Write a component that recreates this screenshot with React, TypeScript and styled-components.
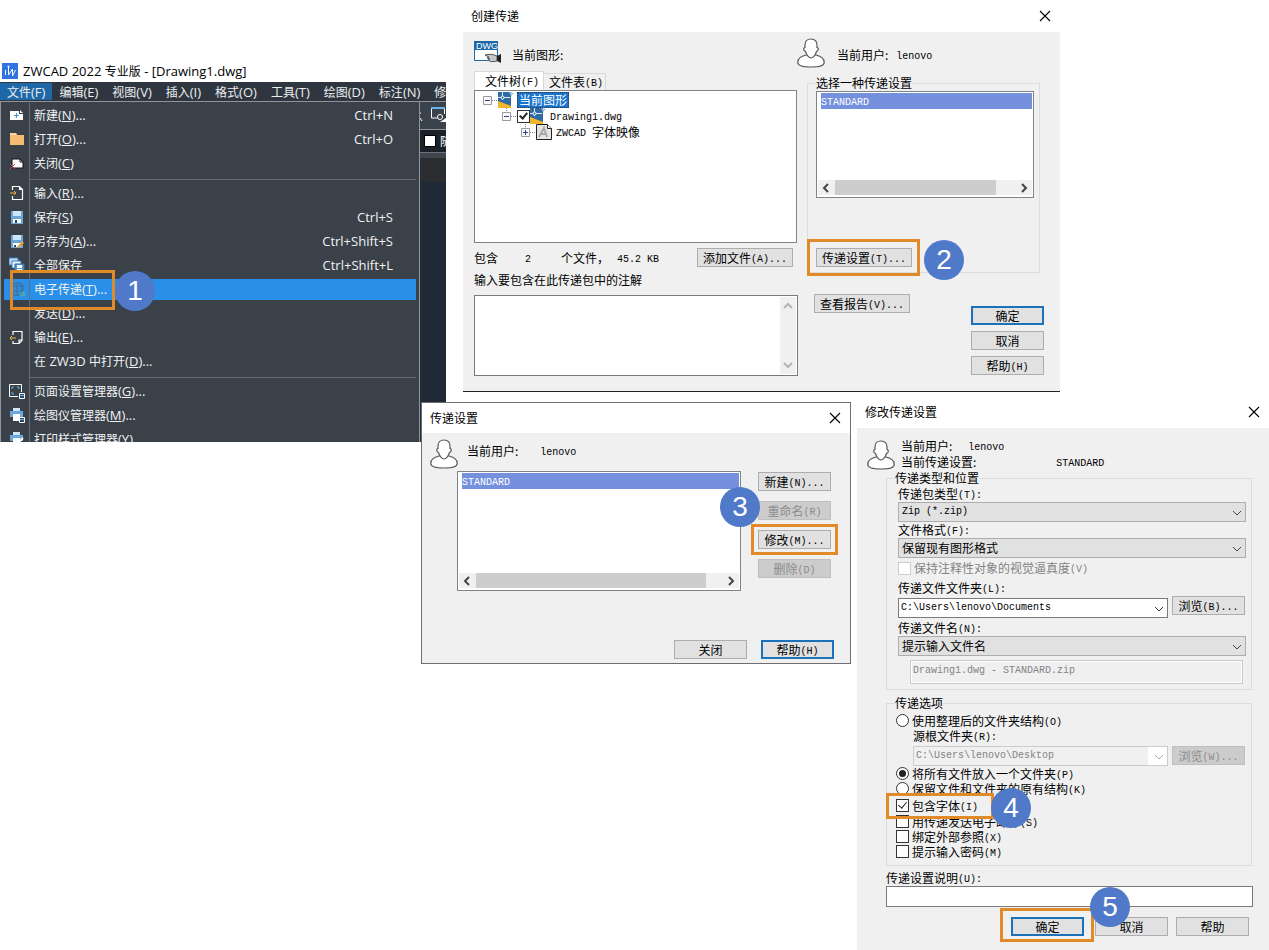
import React from 'react';
import styled, { createGlobalStyle, css } from 'styled-components';

const Global = createGlobalStyle`
  *, *::before, *::after { box-sizing: border-box; }
  body { margin: 0; background: #fff; }
  button, input, select, textarea { font: inherit; color: inherit; margin: 0; }
`;

/* ---------- text ---------- */

const Latin = styled.span`
  line-height: 1;
  white-space: pre;
`;

const Mixed = ({ children }: { children: string }) => (
  <>
    {children
      .split(/([\x20-\x7e]+)/)
      .filter(Boolean)
      .map((run, i) => (/^[\x20-\x7e]/.test(run) ? <Latin key={i}>{run}</Latin> : run))}
  </>
);

/* ---------- desktop and windows ---------- */

const Desktop = styled.main`
  position: relative;
  min-height: 100vh;
  overflow: hidden;
  font-family: 'Noto Sans CJK SC', sans-serif;
  font-size: 12px;
  line-height: 16px;
  color: #000;
`;

const AppWindow = styled.section`
  position: absolute;
  left: 0;
  top: 60px;
  width: 446px;
  overflow: hidden;
  background: #fff;
  ${Latin} { font-family: 'Open Sans', sans-serif; font-size: 13px; }
`;

const Dialog = styled.section<{ $x: number; $y: number; $w: number; $edge?: 'all' | 'bottom' }>`
  position: absolute;
  left: ${(p) => p.$x}px;
  top: ${(p) => p.$y}px;
  width: ${(p) => p.$w}px;
  background: #f0f0f0;
  ${(p) => p.$edge === 'all' && css`border: 1px solid #6c6e71;`}
  ${(p) => p.$edge === 'bottom' && css`border-bottom: 1px solid #222;`}
  ${Latin} { font-family: 'Liberation Mono', monospace; font-size: 10px; vertical-align: 1px; }
`;

const DialogTitle = styled.header<{ $h: number }>`
  display: flex;
  align-items: center;
  justify-content: space-between;
  height: ${(p) => p.$h}px;
  padding: 0 9px 0 8px;
  background: #fff;
  h2 { margin: 0; font-size: 12px; font-weight: 400; }
`;

const CloseButton = styled.button`
  display: grid;
  padding: 0;
  border: 0;
  background: none;
`;

const TitleBar = ({ text, h }: { text: string; h: number }) => (
  <DialogTitle $h={h}>
    <h2>{text}</h2>
    <CloseButton aria-label="关闭">
      <svg width="12" height="12" viewBox="0 0 12 12" fill="none" stroke="#000" strokeWidth="1.1">
        <path d="M1 1l10 10M11 1L1 11" />
      </svg>
    </CloseButton>
  </DialogTitle>
);

/* ---------- step marks ---------- */

const Anchor = styled.div`
  position: relative;
  display: flex;
`;

const Ring = styled.span<{ $inset: string; $w?: number }>`
  position: absolute;
  z-index: 2;
  inset: ${(p) => p.$inset};
  ${(p) => p.$w && css`width: ${p.$w}px;`}
  border: 3px solid #e08a28;
  pointer-events: none;
`;

const Badge = styled.span<{ $left: number; $top: number }>`
  position: absolute;
  z-index: 3;
  left: ${(p) => p.$left}px;
  top: ${(p) => p.$top}px;
  width: 40px;
  height: 40px;
  border-radius: 50%;
  background: #5179c9;
  color: #fff;
  font: 28px/40px 'Liberation Sans', sans-serif;
  text-align: center;
`;

/* ---------- application window ---------- */

const AppTitle = styled.header`
  display: flex;
  align-items: center;
  gap: 5px;
  height: 22px;
  padding: 0 2px;
  h1 { margin: 0; font-size: 12px; font-weight: 400; white-space: nowrap; }
`;

const MenuBar = styled.nav`
  display: flex;
  height: 19px;
  padding: 1px 0 1px;
  background: #2f363f;
  color: #eceef0;
`;

const MenuBarItem = styled.button<{ $open?: boolean }>`
  flex: none;
  padding: 0 7px;
  border: 0;
  background: ${(p) => (p.$open ? '#1e68a8' : 'none')};
  line-height: 16px;
  white-space: nowrap;
`;

const AppBody = styled.div`
  display: flex;
  background: #202a36;
`;

const Menu = styled.div`
  flex: none;
  width: 420px;
  padding: 1px 3px 0;
  border: 1px solid #8d949b;
  border-bottom: 0;
  background: #3a4149;
  color: #f1f2f3;
`;

const IconSlot = styled.span`
  display: flex;
  flex: none;
  align-items: center;
  width: 26px;
  height: 24px;
  padding-left: 5px;
  border-right: 1px solid #666d75;
`;

const MenuRow = styled.button<{ $active?: boolean; $cut?: boolean }>`
  position: relative;
  display: flex;
  align-items: flex-start;
  width: 100%;
  height: ${(p) => (p.$cut ? 15 : 24)}px;
  padding: 0 23px 0 0;
  border: 0;
  overflow: ${(p) => (p.$cut ? 'hidden' : 'visible')};
  background: ${(p) => (p.$active ? 'linear-gradient(#2a8fe8, #2a8fe8) 0 2px / 100% 21px no-repeat' : 'none')};
  line-height: 24px;
  text-align: left;
  white-space: nowrap;
`;

const MenuText = styled.span`
  flex: 1;
  padding-left: 4px;
`;

const MenuLine = styled.div`
  display: flex;
  height: 6px;
  &::before { content: ''; width: 26px; border-right: 1px solid #666d75; }
  &::after { content: ''; flex: 1; height: 1px; margin-top: 4px; background: #666d75; }
`;

const Side = styled.div`
  flex: 1;
  min-width: 0;
  overflow: hidden;
  color: #fff;
`;

const SideTools = styled.div`
  height: 29px;
  border-top: 1px solid #8d949b;
  border-bottom: 1px solid #8d949b;
  background: #3a424c;
`;

const SideLayer = styled.div`
  display: flex;
  align-items: center;
  gap: 4px;
  height: 23px;
  padding-left: 4px;
  border-bottom: 1px solid #6b727a;
  background: #1b2029;
  white-space: nowrap;
  &::before { content: ''; flex: none; width: 12px; height: 12px; background: #fff; border: 1px solid #000; }
`;

const SideStrip = styled.div`
  height: 29px;
  border-top: 5px solid #3f4650;
  background: #2c2d31;
`;

type IconName = 'new' | 'open' | 'close' | 'import' | 'save' | 'saveas' | 'saveall' | 'globe' | 'export' | 'page' | 'plotter' | 'style';

const glyphs: Record<IconName, React.ReactNode> = {
  new: (
    <>
      <path d="M1 4h9v3h4v6H1z" fill="#fff" />
      <path d="M11 3l3 3h-3z" fill="#fff" />
      <path d="M7.500 6v5M5 8.500h5" stroke="#3b97d8" />
    </>
  ),
  open: (
    <>
      <path d="M1 2h6l1 2h7v10H1z" fill="#f5bb72" />
      <path d="M1 2h6l1 2H1z" fill="#fbd9a6" />
    </>
  ),
  close: (
    <>
      <path d="M3 4h8l3 3v6H3z" fill="#fff" stroke="#111" />
      <path d="M11 4v3h3" stroke="#111" fill="none" />
      <path d="M1 9l5 5M6 9l-5 5" stroke="#b8444c" />
    </>
  ),
  import: (
    <>
      <path d="M3.500 5V1.500h7l3 3v10h-10V11M10.500 1.500v3h3" stroke="#fff" fill="none" strokeWidth="1.2" />
      <path d="M1 8h6M5 6l2 2-2 2" stroke="#e8b04a" fill="none" />
    </>
  ),
  save: (
    <>
      <path d="M2 2h12v13H2z" fill="#6ba5d8" />
      <path d="M4 2h8v5H4z" fill="#cfe6fa" />
      <path d="M4 10h8v4H4z" fill="#fff" />
      <path d="M6 11h2v3H6z" fill="#2d4a68" />
    </>
  ),
  saveas: (
    <>
      <path d="M2 2h12v13H2z" fill="#6ba5d8" />
      <path d="M4 2h8v5H4z" fill="#cfe6fa" />
      <path d="M4 10h8v4H4z" fill="#fff" />
      <path d="M5 12h2v2H5z" fill="#2d4a68" />
      <path d="M8 14l5-6 2 2-5 5z" fill="#e8a13a" />
    </>
  ),
  saveall: (
    <>
      <path d="M0 1h9v7H0z" fill="#bcdcf7" stroke="#3c7fbd" />
      <path d="M3 4h9v7H3z" fill="#e6f3fd" stroke="#3c7fbd" />
      <path d="M6 7h9v8H6z" fill="#5b9bd5" stroke="#2f6dab" />
      <path d="M8 8h5v3H8zM8 12h5v2H8z" fill="#fff" />
    </>
  ),
  globe: (
    <g stroke="#3f6c98" fill="none">
      <circle cx="8" cy="8" r="6.500" />
      <path d="M1 5h14M1 10h14M8 1v14M5 2c-2 4-2 8 0 12M11 2c2 4 2 8 0 12" />
      <path d="M11 12h5M14 10l2 2M16 14h-5M13 16l-2-2" stroke="#5fbf8a" />
    </g>
  ),
  export: (
    <>
      <path d="M4 6V2.500h9v9l-3 3H4V12M10 14v-3h3" stroke="#fff" fill="none" strokeWidth="1.200" />
      <path d="M1 9h6M3 7L1 9l2 2" stroke="#e8b04a" fill="none" />
    </>
  ),
  page: (
    <>
      <path d="M9 13.500H.500V1.500h12V9" stroke="#fff" fill="none" />
      <path d="M3 6V4h2M8 4h2v2M3 9v2h2" stroke="#6bb1ee" fill="none" />
      <path d="M10.500 10.500h5v5h-5z" fill="#2d4a68" stroke="#fff" />
      <path d="M11 12.500h4" stroke="#6bb1ee" />
    </>
  ),
  plotter: (
    <>
      <path d="M4 1h7v4H4z" fill="#cfe6fa" />
      <path d="M1 4h13v6H1z" fill="#6aa7dd" />
      <path d="M4 7h7v7H4z" fill="#fff" />
      <path d="M10.500 10.500h5v5h-5z" fill="#2d4a68" stroke="#fff" />
      <path d="M11 12.500h4" stroke="#6bb1ee" />
    </>
  ),
  style: (
    <>
      <path d="M4 1h7v4H4z" fill="#cfe6fa" />
      <path d="M1 4h13v6H1z" fill="#6aa7dd" />
      <path d="M4 7h7v7H4z" fill="#fff" />
      <path d="M8 13l6-6" stroke="#fff" strokeWidth="2" />
    </>
  ),
};

interface Entry {
  icon?: IconName;
  label: string;
  mnemonic?: string;
  tail?: string;
  shortcut?: string;
  active?: boolean;
  cut?: boolean;
}

const fileMenu: (Entry | null)[] = [
  { icon: 'new', label: '新建', mnemonic: 'N', tail: '...', shortcut: 'Ctrl+N' },
  { icon: 'open', label: '打开', mnemonic: 'O', tail: '...', shortcut: 'Ctrl+O' },
  { icon: 'close', label: '关闭', mnemonic: 'C' },
  null,
  { icon: 'import', label: '输入', mnemonic: 'R', tail: '...' },
  { icon: 'save', label: '保存', mnemonic: 'S', shortcut: 'Ctrl+S' },
  { icon: 'saveas', label: '另存为', mnemonic: 'A', tail: '...', shortcut: 'Ctrl+Shift+S' },
  { icon: 'saveall', label: '全部保存', shortcut: 'Ctrl+Shift+L' },
  { icon: 'globe', label: '电子传递', mnemonic: 'T', tail: '...', active: true },
  { label: '发送', mnemonic: 'D', tail: '...' },
  { icon: 'export', label: '输出', mnemonic: 'E', tail: '...' },
  { label: '在 ZW3D 中打开', mnemonic: 'D', tail: '...' },
  null,
  { icon: 'page', label: '页面设置管理器', mnemonic: 'G', tail: '...' },
  { icon: 'plotter', label: '绘图仪管理器', mnemonic: 'M', tail: '...' },
  { icon: 'style', label: '打印样式管理器', mnemonic: 'Y', cut: true },
];

const MenuItem = ({ e }: { e: Entry }) => (
  <MenuRow $active={e.active} $cut={e.cut}>
    <IconSlot>
      {e.icon && <svg width="16" height="16" viewBox="0 0 16 16">{glyphs[e.icon]}</svg>}
    </IconSlot>
    <MenuText>
      <Mixed>{e.label}</Mixed>
      {e.mnemonic && <Latin>(<u>{e.mnemonic}</u>){e.tail}</Latin>}
    </MenuText>
    {e.shortcut && <span><Mixed>{e.shortcut}</Mixed></span>}
    {e.active && (
      <>
        <Ring $inset="-7px auto -9px 6px" $w={105} />
        <Badge $left={111} $top={-6}>1</Badge>
      </>
    )}
  </MenuRow>
);

/* ---------- dialog parts ---------- */

const Button = styled.button<{ $wide?: boolean; $primary?: boolean }>`
  flex: none;
  width: ${(p) => (p.$wide ? 96 : 73)}px;
  height: 19px;
  padding: 0;
  border: ${(p) => (p.$primary ? '2px solid #1b72ba' : '1px solid #adadad')};
  background: #e1e1e1;
  line-height: ${(p) => (p.$primary ? 14 : 16)}px;
  white-space: nowrap;
  &:disabled { border-color: #bfbfbf; background: #ccc; color: #8b8b8b; }
`;

const Person = () => (
  <svg width="28" height="30" viewBox="0 0 28 30" fill="#fff" stroke="#55585c" strokeWidth="1.200">
    <path d="M9 17C4 18.500.800 20 .800 24.500c0 3 4 4.500 13.200 4.500s13.200-1.500 13.200-4.500c0-4.500-3.200-6-8.200-7.500z" />
    <path d="M14 1c-4 0-6 2.500-6 6v2.500c-1.800 0-1.800 3.500.500 4C9.500 17 12 20 14 20s4.500-3 5.500-6.500c2.300-.500 2.300-4 .500-4V7c0-3.500-2-6-6-6z" />
  </svg>
);

const Chevron = ({ d, color = '#444', w = 2 }: { d: 'left' | 'right' | 'up' | 'down'; color?: string; w?: number }) => {
  const paths = { left: 'M7 1L3 5l4 4', right: 'M3 1l4 4-4 4', up: 'M1 7l4-4 4 4', down: 'M1 3l4 4 4-4' };
  return (
    <svg width="10" height="10" viewBox="0 0 10 10" fill="none" stroke={color} strokeWidth={w}>
      <path d={paths[d]} />
    </svg>
  );
};

const ListFrame = styled.div<{ $h: number; $w?: number }>`
  display: flex;
  flex-direction: column;
  justify-content: space-between;
  flex: none;
  width: ${(p) => (p.$w ? `${p.$w}px` : '100%')};
  height: ${(p) => p.$h}px;
  padding: 1px 1px 2px;
  border: 1px solid #7f848b;
  background: #fff;
`;

const Option = styled.div`
  height: 16px;
  margin-left: 3px;
  background: #7590dc;
  color: #fff;
`;

const ScrollTrack = styled.div`
  display: flex;
  align-items: center;
  height: 15px;
  padding: 0 3px;
  background: #f0f0f0;
`;

const ScrollThumb = styled.span<{ $rest: number }>`
  flex: 1;
  height: 15px;
  margin: 0 ${(p) => p.$rest}px 0 4px;
  background: #cdcdcd;
`;

const SetupList = ({ h, w, rest }: { h: number; w?: number; rest: number }) => (
  <ListFrame $h={h} $w={w} role="listbox" aria-label="传递设置">
    <Option role="option" aria-selected="true"><Mixed>STANDARD</Mixed></Option>
    <ScrollTrack>
      <Chevron d="left" />
      <ScrollThumb $rest={rest} />
      <Chevron d="right" />
    </ScrollTrack>
  </ListFrame>
);

const Group = styled.fieldset`
  min-width: 0;
  margin: 0;
  padding: 0 5px 5px 8px;
  border: 1px solid #dcdcdc;
  legend { height: 16px; padding: 0; }
`;

const Who = styled.div<{ $gap: number }>`
  display: flex;
  align-items: baseline;
  gap: ${(p) => p.$gap}px;
`;

/* ---------- dialog 1: create transmittal ---------- */

const CreateBody = styled.div`
  display: grid;
  grid-template-columns: 324px 1fr;
  column-gap: 9px;
  padding: 6px 16px 15px 11px;
`;

const HeadCell = styled.div<{ $gap: number; $indent?: boolean }>`
  display: flex;
  align-items: center;
  gap: ${(p) => p.$gap}px;
  height: 33px;
  margin-left: ${(p) => (p.$indent ? -10 : 0)}px;
  svg { margin-bottom: 3px; }
`;

const Tabs = styled.div`
  display: flex;
  align-items: flex-end;
  height: 19px;
`;

const Tab = styled.button<{ $on?: boolean }>`
  height: ${(p) => (p.$on ? 19 : 17)}px;
  padding: 0 ${(p) => (p.$on ? 4 : 2)}px 0 ${(p) => (p.$on ? 10 : 5)}px;
  border: 1px solid #d9d9d9;
  border-bottom: 0;
  border-left-width: ${(p) => (p.$on ? 1 : 0)}px;
  background: ${(p) => (p.$on ? '#fff' : '#f0f0f0')};
  line-height: 16px;
`;

const Tree = styled.div`
  width: 323px;
  height: 153px;
  padding-top: 1px;
  border: 1px solid #7f848b;
  background: #fff;
`;

const TreeRow = styled.div<{ $depth: number }>`
  display: flex;
  align-items: center;
  height: 16px;
  padding-left: ${(p) => 8 + p.$depth * 19}px;
  input { flex: none; }
`;

const TreeLabel = styled.span<{ $gap: number; $selected?: boolean }>`
  height: 16px;
  margin-left: ${(p) => p.$gap}px;
  padding: 0 2px;
  ${(p) => p.$selected && css`background: #1874cd; color: #fff; outline: 1px dotted #333; outline-offset: -1px;`}
`;

const Expander = ({ open, top }: { open?: boolean; top?: boolean }) => (
  <svg width="15" height="16" viewBox="0 0 15 16" fill="none">
    {!top && <path d="M4.500 0v4" stroke="#888" strokeDasharray="1 1" />}
    <path d="M9 8.500h6" stroke="#888" strokeDasharray="1 1" />
    <path d="M.500 4.500h8v8h-8z" fill="#fafafa" stroke="#9a9a9a" />
    <path d={open ? 'M2 8.500h5' : 'M2 8.500h5M4.500 6v5'} stroke="#33439a" />
  </svg>
);

const DrawingIcon = () => (
  <svg width="16" height="16" viewBox="0 0 16 16" fill="none">
    <path d="M0 0h13v16H0z" fill="#2f6aa5" />
    <path d="M0 9l13 5v2H0z" fill="#f2b62b" />
    <path d="M11 0l5 1-3 3z" fill="#9fc0e0" />
    <path d="M4.500 0v8M0 5.500h12" stroke="#dcebf8" />
    <circle cx="4.500" cy="5.500" r="1.500" fill="#2f6aa5" stroke="#fff" />
  </svg>
);

const FontIcon = () => (
  <svg width="16" height="16" viewBox="0 0 16 16" fill="none">
    <path d="M.500.500h11l4 4v11H.500z" fill="#e4e4e4" stroke="#222" />
    <path d="M11.500.500v4h4" fill="#fff" stroke="#222" />
    <path d="M3 13l5-9 3 9M5 10h5" stroke="#aaa" strokeWidth="2" />
  </svg>
);

const DwgIcon = () => (
  <svg width="28" height="24" viewBox="0 0 28 24" fill="none">
    <path d="M.500.500h23v19H.500z" fill="#fff" stroke="#1b67a8" />
    <path d="M0 0h24v9H0z" fill="#1b67a8" />
    <text x="2" y="8" fontSize="9" fontFamily="Liberation Sans, sans-serif" fill="#fff">DWG</text>
    <path d="M11 14c4-1 8-1 12 1v5c-4 1-7 1-9-1l2-1-3-1 2-1z" fill="#c8c8c8" stroke="#555" />
    <path d="M23 15l4-2v9l-4-2z" fill="#222" />
  </svg>
);

const InfoRow = styled.div`
  display: flex;
  align-items: center;
  height: 19px;
  margin: 5px 0;
  padding-right: 5px;
`;

const InfoCell = styled.span<{ $w?: number }>`
  ${(p) => (p.$w ? `flex: none; width: ${p.$w}px;` : 'flex: 1;')}
  white-space: nowrap;
`;

const Note = styled.label`
  display: block;
  height: 16px;
`;

const NoteBox = styled.div`
  display: flex;
  height: 81px;
  margin-top: 7px;
  padding: 1px;
  border: 1px solid #7a7a7a;
  background: #fff;
  textarea { flex: 1; min-width: 0; border: 0; outline: 0; resize: none; background: none; overflow: hidden; }
`;

const NoteScroll = styled.span`
  display: flex;
  flex-direction: column;
  align-items: center;
  justify-content: space-between;
  width: 16px;
  padding: 4px 0;
  background: #f0f0f0;
`;

const Column = styled.div<{ $top?: number }>`
  display: flex;
  flex-direction: column;
  padding-top: ${(p) => p.$top ?? 0}px;
`;

const SetupGroup = styled(Group)`
  margin-right: 4px;
`;

const SetupButton = styled(Anchor)`
  width: 96px;
  margin-top: 50px;
`;

const Actions = styled.div`
  display: flex;
  justify-content: space-between;
  align-items: flex-start;
  margin-top: 21px;
  padding-left: 7px;
`;

const Stack = styled.div<{ $gap: number; $top?: number }>`
  display: flex;
  flex-direction: column;
  gap: ${(p) => p.$gap}px;
  padding-top: ${(p) => p.$top ?? 0}px;
`;

const CreateDialog = () => (
  <Dialog $x={463} $y={0} $w={597} $edge="bottom">
    <TitleBar text="创建传递" h={32} />
    <CreateBody>
      <HeadCell $gap={10}><DwgIcon /><span>当前图形:</span></HeadCell>
      <HeadCell $gap={12} $indent><Person /><Who $gap={8}><span>当前用户:</span><span><Mixed>lenovo</Mixed></span></Who></HeadCell>
      <Column>
        <Tabs role="tablist">
          <Tab $on role="tab" aria-selected="true"><Mixed>文件树(F)</Mixed></Tab>
          <Tab role="tab" aria-selected="false"><Mixed>文件表(B)</Mixed></Tab>
        </Tabs>
        <Tree role="tree" aria-label="文件树">
          <TreeRow $depth={0} role="treeitem">
            <Expander open top /><DrawingIcon /><TreeLabel $gap={3} $selected>当前图形</TreeLabel>
          </TreeRow>
          <TreeRow $depth={1} role="treeitem">
            <Expander open />
            <Check type="checkbox" defaultChecked $bold aria-label="Drawing1.dwg" />
            <DrawingIcon /><TreeLabel $gap={2}><Mixed>Drawing1.dwg</Mixed></TreeLabel>
          </TreeRow>
          <TreeRow $depth={2} role="treeitem">
            <Expander /><FontIcon /><TreeLabel $gap={2}><Mixed>ZWCAD 字体映像</Mixed></TreeLabel>
          </TreeRow>
        </Tree>
        <InfoRow>
          <InfoCell $w={51}>包含</InfoCell>
          <InfoCell $w={36}><Mixed>2</Mixed></InfoCell>
          <InfoCell $w={56}>个文件，</InfoCell>
          <InfoCell><Mixed>45.2 KB</Mixed></InfoCell>
          <Button $wide><Mixed>添加文件(A)...</Mixed></Button>
        </InfoRow>
        <Note htmlFor="note">输入要包含在此传递包中的注解</Note>
        <NoteBox>
          <textarea id="note" />
          <NoteScroll><Chevron d="up" color="#b5b5b5" /><Chevron d="down" color="#b5b5b5" /></NoteScroll>
        </NoteBox>
      </Column>
      <Column $top={4}>
        <SetupGroup>
          <legend>选择一种传递设置</legend>
          <SetupList h={107} rest={23} />
          <SetupButton>
            <Button $wide><Mixed>传递设置(T)...</Mixed></Button>
            <Ring $inset="-9px -8px -9px -9px" />
            <Badge $left={108} $top={-8}>2</Badge>
          </SetupButton>
        </SetupGroup>
        <Actions>
          <Button $wide><Mixed>查看报告(V)...</Mixed></Button>
          <Stack $gap={6} $top={12}>
            <Button $primary>确定</Button>
            <Button>取消</Button>
            <Button><Mixed>帮助(H)</Mixed></Button>
          </Stack>
        </Actions>
      </Column>
    </CreateBody>
  </Dialog>
);

/* ---------- dialog 2: transmittal setups ---------- */

const SetupsBody = styled.div`
  padding: 6px 16px 4px 8px;
`;

const SetupsHead = styled.div`
  display: flex;
  align-items: flex-start;
  gap: 9px;
  height: 32px;
`;

const SetupsMain = styled.div`
  display: flex;
  gap: 17px;
  padding-left: 27px;
`;

const SetupsFooter = styled.div`
  display: flex;
  justify-content: flex-end;
  gap: 14px;
  margin-top: 49px;
`;

const HeadText = styled(Who)`
  padding-top: 4px;
`;

const SetupsDialog = () => (
  <Dialog $x={421} $y={402} $w={430} $edge="all">
    <TitleBar text="传递设置" h={30} />
    <SetupsBody>
      <SetupsHead>
        <Person />
        <HeadText $gap={22}><span>当前用户:</span><span><Mixed>lenovo</Mixed></span></HeadText>
      </SetupsHead>
      <SetupsMain>
        <SetupList h={120} w={284} rest={20} />
        <Stack $gap={10} $top={1}>
          <Button><Mixed>新建(N)...</Mixed></Button>
          <Button disabled><Mixed>重命名(R)</Mixed></Button>
          <Anchor>
            <Button><Mixed>修改(M)...</Mixed></Button>
            <Ring $inset="-6px -7px -6px -7px" />
            <Badge $left={-38} $top={-43}>3</Badge>
          </Anchor>
          <Button disabled><Mixed>删除(D)</Mixed></Button>
        </Stack>
      </SetupsMain>
      <SetupsFooter>
        <Button>关闭</Button>
        <Button $primary><Mixed>帮助(H)</Mixed></Button>
      </SetupsFooter>
    </SetupsBody>
  </Dialog>
);

/* ---------- dialog 3: modify setup ---------- */

const Check = styled.input<{ $bold?: boolean }>`
  appearance: none;
  position: relative;
  flex: none;
  width: 13px;
  height: 13px;
  border: 1px solid #333;
  border-radius: ${(p) => (p.type === 'radio' ? '50%' : '0')};
  background: #fff;
  &:disabled { border-color: #ccc; }
  &[type='checkbox']:checked::after {
    content: '';
    position: absolute;
    left: 3px;
    top: 0;
    width: 5px;
    height: 8px;
    border: solid #222;
    border-width: 0 ${(p) => (p.$bold ? '2px 2px' : '1px 1px')} 0;
    transform: rotate(40deg);
  }
  &[type='radio']:checked::after {
    content: '';
    position: absolute;
    inset: 2px;
    border-radius: 50%;
    background: #222;
  }
`;

const Choice = styled.label<{ $h?: number; $off?: boolean }>`
  display: flex;
  align-items: center;
  gap: 3px;
  height: ${(p) => p.$h ?? 15}px;
  color: ${(p) => (p.$off ? '#838383' : '#000')};
  white-space: nowrap;
`;

const ModifyBody = styled.div`
  padding: 10px 16px 14px 10px;
`;

const ModifyHead = styled.div`
  display: flex;
  gap: 6px;
  height: 32px;
  svg { margin-top: 2px; }
`;

const Sections = styled.div`
  display: flex;
  flex-direction: column;
  gap: 5px;
  padding: 0 1px 0 19px;
`;

const Fields = styled.div`
  display: flex;
  flex-direction: column;
  padding-left: 3px;
`;

const Options = styled.div`
  display: flex;
  flex-direction: column;
  padding: 2px 0 1px 1px;
`;

const FieldLabel = styled.label<{ $top?: number; $in?: number }>`
  height: 16px;
  margin-top: ${(p) => p.$top ?? 0}px;
  margin-left: ${(p) => p.$in ?? 0}px;
`;

const FieldRow = styled.div<{ $in?: number; $h: number; $top?: number }>`
  display: flex;
  justify-content: space-between;
  align-items: flex-start;
  gap: 4px;
  height: ${(p) => p.$h}px;
  margin-top: ${(p) => p.$top ?? 0}px;
  padding: 0 1px 0 ${(p) => p.$in ?? 0}px;
`;

const SelectWrap = styled.div<{ $end?: boolean }>`
  position: relative;
  flex: 1;
  align-self: ${(p) => (p.$end ? 'flex-end' : 'auto')};
  height: 20px;
  svg { position: absolute; right: 4px; top: 6px; pointer-events: none; }
`;

const Select = styled.select<{ $kind?: 'edit' | 'off'; $mono?: boolean }>`
  appearance: none;
  display: block;
  width: 100%;
  height: 20px;
  padding: 0 18px 0 3px;
  border: 1px solid #adadad;
  border-radius: 0;
  background: #e1e1e1;
  ${(p) => p.$mono && css`font: 10px/16px 'Liberation Mono', monospace;`}
  ${(p) => p.$kind === 'edit' && css`border-color: #7a7a7a; background: #fff; padding-left: 2px;`}
  ${(p) => p.$kind === 'off' && css`
    border-color: #ccc;
    background: linear-gradient(90deg, #f0f0f0 calc(100% - 19px), #fff 0);
    padding-left: 2px;
    &:disabled { color: #838383; opacity: 1; }
  `}
`;

const Combo = ({ id, value, kind, mono, end }: { id: string; value: string; kind?: 'edit' | 'off'; mono?: boolean; end?: boolean }) => (
  <SelectWrap $end={end}>
    <Select id={id} $kind={kind} $mono={mono} disabled={kind === 'off'} defaultValue={value}>
      <option>{value}</option>
    </Select>
    <Chevron d="down" w={1} color={kind === 'off' ? '#aaa' : '#444'} />
  </SelectWrap>
);

const NameBox = styled.input`
  height: 24px;
  margin: 4px 3px 0 12px;
  padding: 0 2px 3px;
  border: 1px solid #ccc;
  background: #f0f0f0;
  box-shadow: inset 0 0 0 1px #fff;
  font: 10px 'Liberation Mono', monospace;
  &:disabled { color: #838383; }
`;

const IncludeFonts = styled(Anchor)`
  margin: 2px 0 1px;
`;

const Description = styled.div`
  display: flex;
  flex-direction: column;
  padding: 4px 0 0 19px;
  input { height: 21px; border: 1px solid #7a7a7a; background: #fff; }
`;

const ModifyFooter = styled.div`
  display: flex;
  justify-content: flex-end;
  gap: 8px;
  margin-top: 10px;
  padding-right: 4px;
`;

const OkAnchor = styled(Anchor)`
  margin-right: 3px;
`;

const HeadLines = styled.div`
  white-space: nowrap;
`;

const ModifyDialog = () => (
  <Dialog $x={857} $y={396} $w={412}>
    <TitleBar text="修改传递设置" h={32} />
    <ModifyBody>
      <ModifyHead>
        <Person />
        <HeadLines>
          <Who $gap={16}><span>当前用户:</span><span><Mixed>lenovo</Mixed></span></Who>
          <Who $gap={80}><span>当前传递设置:</span><span><Mixed>STANDARD</Mixed></span></Who>
        </HeadLines>
      </ModifyHead>
      <Sections>
        <Group>
          <legend>传递类型和位置</legend>
          <Fields>
            <FieldLabel htmlFor="pack"><Mixed>传递包类型(T):</Mixed></FieldLabel>
            <Combo id="pack" value="Zip (*.zip)" mono />
            <FieldLabel htmlFor="format"><Mixed>文件格式(F):</Mixed></FieldLabel>
            <Combo id="format" value="保留现有图形格式" />
            <Choice $h={20} $off><Check type="checkbox" disabled /><span><Mixed>保持注释性对象的视觉逼真度(V)</Mixed></span></Choice>
            <FieldLabel $top={2} htmlFor="folder"><Mixed>传递文件文件夹(L):</Mixed></FieldLabel>
            <FieldRow $h={22}>
              <Combo id="folder" value="C:\Users\lenovo\Documents" kind="edit" mono end />
              <Button><Mixed>浏览(B)...</Mixed></Button>
            </FieldRow>
            <FieldLabel $top={2} htmlFor="naming"><Mixed>传递文件名(N):</Mixed></FieldLabel>
            <Combo id="naming" value="提示输入文件名" />
            <NameBox disabled aria-label="文件名" defaultValue="Drawing1.dwg - STANDARD.zip" />
          </Fields>
        </Group>
        <Group>
          <legend>传递选项</legend>
          <Options>
            <Choice><Check type="radio" name="structure" /><span><Mixed>使用整理后的文件夹结构(O)</Mixed></span></Choice>
            <FieldLabel $in={17} htmlFor="root"><Mixed>源根文件夹(R):</Mixed></FieldLabel>
            <FieldRow $in={17} $h={20} $top={2}>
              <Combo id="root" value="C:\Users\lenovo\Desktop" kind="off" mono />
              <Button disabled><Mixed>浏览(W)...</Mixed></Button>
            </FieldRow>
            <Choice><Check type="radio" name="structure" defaultChecked /><span><Mixed>将所有文件放入一个文件夹(P)</Mixed></span></Choice>
            <Choice><Check type="radio" name="structure" /><span><Mixed>保留文件和文件夹的原有结构(K)</Mixed></span></Choice>
            <IncludeFonts>
              <Choice><Check type="checkbox" defaultChecked /><span><Mixed>包含字体(I)</Mixed></span></Choice>
              <Ring $inset="-5px auto -6px -10px" $w={108} />
              <Badge $left={95} $top={-10}>4</Badge>
            </IncludeFonts>
            <Choice><Check type="checkbox" /><span><Mixed>用传递发送电子邮件(S)</Mixed></span></Choice>
            <Choice><Check type="checkbox" /><span><Mixed>绑定外部参照(X)</Mixed></span></Choice>
            <Choice><Check type="checkbox" /><span><Mixed>提示输入密码(M)</Mixed></span></Choice>
          </Options>
        </Group>
      </Sections>
      <Description>
        <FieldLabel htmlFor="desc"><Mixed>传递设置说明(U):</Mixed></FieldLabel>
        <input id="desc" />
      </Description>
      <ModifyFooter>
        <OkAnchor>
          <Button $primary>确定</Button>
          <Ring $inset="-9px -10px -6px -11px" />
          <Badge $left={79} $top={-30}>5</Badge>
        </OkAnchor>
        <Button>取消</Button>
        <Button>帮助</Button>
      </ModifyFooter>
    </ModifyBody>
  </Dialog>
);

/* ---------- page ---------- */

const menus = ['文件(F)', '编辑(E)', '视图(V)', '插入(I)', '格式(O)', '工具(T)', '绘图(D)', '标注(N)', '修改(M)'];

export default function App() {
  return (
    <>
      <Global />
      <Desktop>
        <AppWindow>
          <AppTitle>
            <svg width="16" height="16" viewBox="0 0 16 16" fill="none" stroke="#fff">
              <path d="M0 0h16v16H0z" fill="#2f74e0" stroke="none" />
              <path d="M3.500 12V7M6.500 4v8l4-6v7l3-6" />
              <circle cx="6.500" cy="3.500" r="1" fill="#fff" stroke="none" />
            </svg>
            <h1><Mixed>ZWCAD 2022 专业版 - [Drawing1.dwg]</Mixed></h1>
          </AppTitle>
          <MenuBar>
            {menus.map((m, i) => (
              <MenuBarItem key={m} $open={i === 0}><Mixed>{m}</Mixed></MenuBarItem>
            ))}
          </MenuBar>
          <AppBody>
            <Menu>
              {fileMenu.map((e, i) => (e ? <MenuItem key={i} e={e} /> : <MenuLine key={i} />))}
            </Menu>
            <Side>
              <SideTools>
                <svg width="26" height="27" viewBox="0 0 26 27" fill="none" stroke="#fff">
                  <path d="M0 10v2M0 16l2 3" />
                  <path d="M11.500 7v9h6M24.500 7v5" />
                  <path d="M11 6h14" stroke="#6bb1ee" strokeWidth="2" />
                  <circle cx="20" cy="15" r="2.500" />
                  <path d="M20 20l6-4v4z" fill="#fff" stroke="none" />
                </svg>
              </SideTools>
              <SideLayer>随层</SideLayer>
              <SideStrip />
            </Side>
          </AppBody>
        </AppWindow>
        <CreateDialog />
        <SetupsDialog />
        <ModifyDialog />
      </Desktop>
    </>
  );
}
